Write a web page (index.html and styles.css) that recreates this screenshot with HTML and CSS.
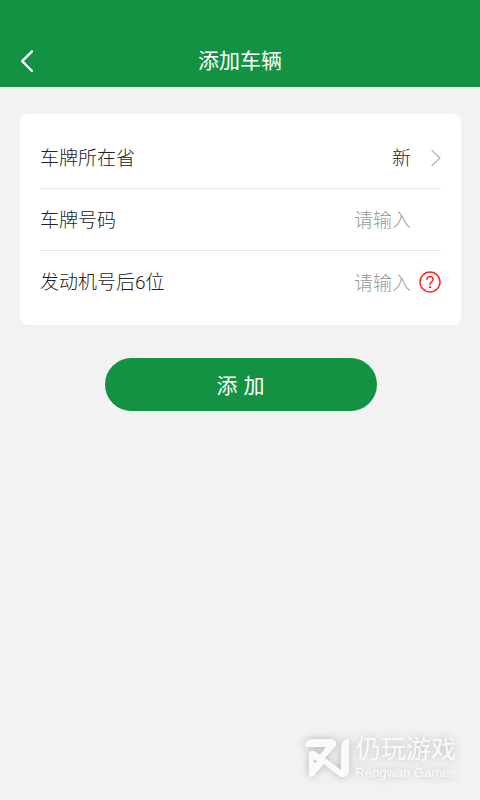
FILE: index.html
```html
<!DOCTYPE html>
<html lang="zh-CN">
<head>
<meta charset="utf-8">
<meta name="viewport" content="width=device-width, initial-scale=1">
<title>添加车辆</title>
<link rel="stylesheet" href="styles.css">
</head>
<body>
<header class="topbar">
  <button class="back" type="button" aria-label="返回">
    <svg width="14" height="24" viewBox="0 0 14 24"><path d="M12 2.300 2.200 12.200 12 22"/></svg>
  </button>
  <h1 class="title">添加车辆</h1>
</header>
<main>
  <form class="form">
    <div class="card">
      <div class="row">
        <label class="label" for="province">车牌所在省</label>
        <select class="field" id="province"><option>新</option></select>
        <span class="slot">
          <svg class="chevron" width="10" height="18" viewBox="0 0 10 18"><path d="M1 1.500 8.800 9 1 16.500"/></svg>
        </span>
      </div>
      <div class="row">
        <label class="label" for="plate">车牌号码</label>
        <input class="field" id="plate" type="text" placeholder="请输入">
        <span class="slot"></span>
      </div>
      <div class="row">
        <label class="label" for="engine">发动机号后6位</label>
        <input class="field" id="engine" type="text" placeholder="请输入">
        <button class="slot help" type="button" aria-label="帮助">
          <svg width="22" height="22" viewBox="0 0 22 22"><circle cx="11" cy="11" r="10"/><path d="M7.900 8.400C8 6.500 9.200 5.400 11 5.400s3.100 1.100 3.100 2.800c0 1.200-.6 1.800-1.600 2.600-1 .8-1.500 1.300-1.500 2.600"/><path class="dot" d="M11 15.300v1.700"/></svg>
        </button>
      </div>
    </div>
    <button class="submit" type="button">添 加</button>
  </form>
</main>
<footer class="brand">
  <svg class="brand-logo" width="44" height="38" viewBox="0 0 44 38">
    <path fill-rule="evenodd" d="M0 8C0 3 3 0 7 0H25C31 0 33 5 29 9L20 19 36 31V9C36 4 39 0 44 0V31C44 38 38 40 33 36L19 25 11 34C9 37 7 38 4 38V16C4 12 8 11 11 13L15 16 21 8ZM9 20.500V24L12 22.200Z"/>
  </svg>
  <div class="brand-text">
    <span class="brand-cn">仍玩游戏</span>
    <span class="brand-en">Rengwan Games</span>
  </div>
</footer>
</body>
</html>
```
FILE: styles.css
```css
* {
  box-sizing: border-box;
}

body {
  margin: 0;
  min-height: 100vh;
  display: flex;
  flex-direction: column;
  background: #f2f2f2;
  color: #222;
  font: 300 19px/28px Roboto, "Noto Sans CJK SC", sans-serif;
}

main {
  flex: 1;
}

button,
input,
select {
  margin: 0;
  padding: 0;
  border: 0;
  background: none;
  color: inherit;
  font: inherit;
}

svg {
  display: block;
  fill: none;
  stroke: currentColor;
  stroke-linecap: round;
  stroke-linejoin: round;
}

.topbar {
  display: grid;
  grid-template-columns: 48px 1fr 48px;
  align-items: center;
  padding-top: 34px;
  height: 87px;
  background: #149243;
  color: #fff;
}

.back {
  padding-left: 20px;
  stroke-width: 2.4;
}

.title {
  margin: 0;
  font-size: 21px;
  font-weight: 400;
  text-align: center;
}

.form {
  display: flex;
  flex-direction: column;
  align-items: center;
  gap: 33px;
  padding: 27px 19px 0 20px;
}

.card {
  width: 100%;
  padding: 13px 20px 12px;
  border-radius: 8px;
  background: #fff;
}

.row {
  display: flex;
  align-items: center;
  height: 62px;
  border-bottom: 1px solid #e6e6e6;
}

.row:last-child {
  border-bottom: 0;
}

.label,
.field {
  height: 30px;
  padding-top: 2px;
}

.label {
  flex: none;
}

.field {
  flex: 1;
  min-width: 0;
  appearance: none;
  text-align: right;
  text-align-last: right;
  outline: 0;
}

.field::placeholder {
  color: #999;
  opacity: 1;
}

.slot {
  flex: none;
  display: flex;
  justify-content: flex-end;
  width: 30px;
}

.chevron {
  color: #b8bcc2;
  stroke-width: 1.5;
}

.help {
  color: #fa2828;
  stroke-width: 1.5;
}

.dot {
  stroke-width: 2;
  stroke-linecap: butt;
}

.submit {
  width: 272px;
  height: 53px;
  padding-top: 2px;
  border-radius: 27px;
  background: #149243;
  color: #fff;
  font-family: "Liberation Sans", "Noto Sans CJK SC", sans-serif;
  font-size: 21px;
  font-weight: 400;
}

.brand {
  display: flex;
  justify-content: flex-end;
  align-items: center;
  gap: 7px;
  padding: 0 24px 20px 0;
  color: #fafafa;
  filter: drop-shadow(0 0 4px rgba(0, 0, 0, 0.25));
}

.brand-logo {
  fill: currentColor;
  stroke: none;
}

.brand-text {
  display: flex;
  flex-direction: column;
  gap: 2px;
  text-align: right;
}

.brand-cn {
  font-size: 25px;
  font-weight: 400;
  line-height: 28px;
}

.brand-en {
  font-family: "Liberation Sans", sans-serif;
  font-size: 13px;
  font-weight: 400;
  line-height: 14px;
}
```
